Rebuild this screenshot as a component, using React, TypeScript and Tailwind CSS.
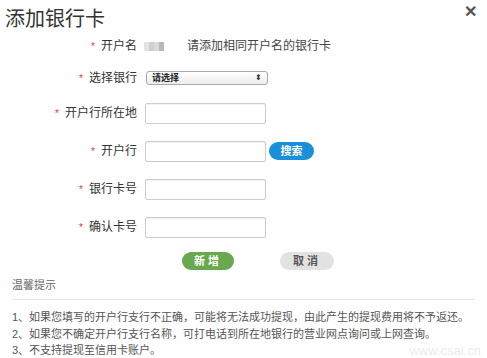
import React from 'react';

const font = { fontFamily: '"Liberation Sans", "Noto Sans CJK SC", sans-serif' };

function Label({ text }: { text: string }) {
    return (
        <div className="w-[139px] flex justify-end items-center pr-[2px] text-[12px] text-[#333]">
            <span className="text-[#e33] text-[10px] mr-[6px]">*</span>
            <span>{text}</span>
        </div>
    );
}

function TextInput() {
    return <div className="ml-[6px] w-[121px] h-[21px] border border-[#ccc] rounded-[2px] bg-white shadow-[inset_0_1px_1px_rgba(0,0,0,0.06)]" />;
}

export default function App() {
    return (
        <div className="relative w-[487px] h-[358px] bg-white overflow-hidden" style={font}>
            {/* header */}
            <div className="h-[36px] flex items-start justify-between">
                <h1 className="pl-[5px] pt-[7px] text-[20px] leading-[24px] text-[#333]">添加银行卡</h1>
                <span className="mr-[10px] mt-[3px] text-[16px] font-bold leading-[18px] text-[#555]">✕</span>
            </div>

            {/* 开户名 */}
            <div className="h-[20px] flex items-center">
                <Label text="开户名" />
                <div className="ml-[5px] flex h-[9px] w-[20px]">
                    <div className="w-[5px] bg-[#e2e2e2]" />
                    <div className="w-[5px] bg-[#cfcfcf]" />
                    <div className="w-[5px] bg-[#dadada]" />
                    <div className="w-[5px] bg-[#b9b9b9]" />
                </div>
                <span className="ml-[23px] text-[12px] text-[#444]">请添加相同开户名的银行卡</span>
            </div>

            {/* 选择银行 */}
            <div className="mt-[10px] h-[24px] flex items-center">
                <Label text="选择银行" />
                <div className="ml-[7px] w-[122px] h-[14px] border border-[#aaa] rounded-[3px] bg-gradient-to-b from-white to-[#ececec] flex items-center justify-between px-[5px]">
                    <span className="text-[9px] font-bold leading-none text-[#222]">请选择</span>
                    <span className="text-[8px] leading-none text-[#333]">⬍</span>
                </div>
            </div>

            <div className="mt-[4px] flex flex-col">
                <div className="h-[38px] flex items-center">
                    <Label text="开户行所在地" />
                    <TextInput />
                </div>
                <div className="h-[38px] flex items-center">
                    <Label text="开户行" />
                    <TextInput />
                    <div className="ml-[3px] w-[45px] h-[18px] rounded-full bg-[#1990d8] flex items-center justify-center text-[11px] font-bold text-white">
                        搜索
                    </div>
                </div>
                <div className="h-[38px] flex items-center">
                    <Label text="银行卡号" />
                    <TextInput />
                </div>
                <div className="h-[38px] flex items-center">
                    <Label text="确认卡号" />
                    <TextInput />
                </div>
            </div>

            {/* buttons */}
            <div className="mt-[6px] flex pl-[182px] gap-[46px]">
                <div className="w-[52px] h-[18px] rounded-full bg-[#6aa84f] flex items-center justify-center text-[11px] font-bold text-white tracking-[3px]">
                    新增
                </div>
                <div className="w-[54px] h-[18px] rounded-full bg-[#e2e2e2] flex items-center justify-center text-[11px] font-bold text-[#555] tracking-[3px]">
                    取消
                </div>
            </div>

            {/* tips */}
            <div className="mt-[8px] mx-[12px] pb-[7px] border-b border-[#e6e6e6] text-[11px] text-[#666] leading-[14px]">温馨提示</div>
            <div className="mt-[9px] pl-[12px] text-[11px] leading-[16.5px] text-[#555] whitespace-nowrap">
                <p>1、如果您填写的开户行支行不正确，可能将无法成功提现，由此产生的提现费用将不予返还。</p>
                <p>2、如果您不确定开户行支行名称，可打电话到所在地银行的营业网点询问或上网查询。</p>
                <p>3、不支持提现至信用卡账户。</p>
            </div>

            {/* watermark */}
            <div className="absolute right-[6px] bottom-[1px] text-[13px] leading-none text-[#000] opacity-[0.08]">www.csai.cn</div>
        </div>
    );
}
